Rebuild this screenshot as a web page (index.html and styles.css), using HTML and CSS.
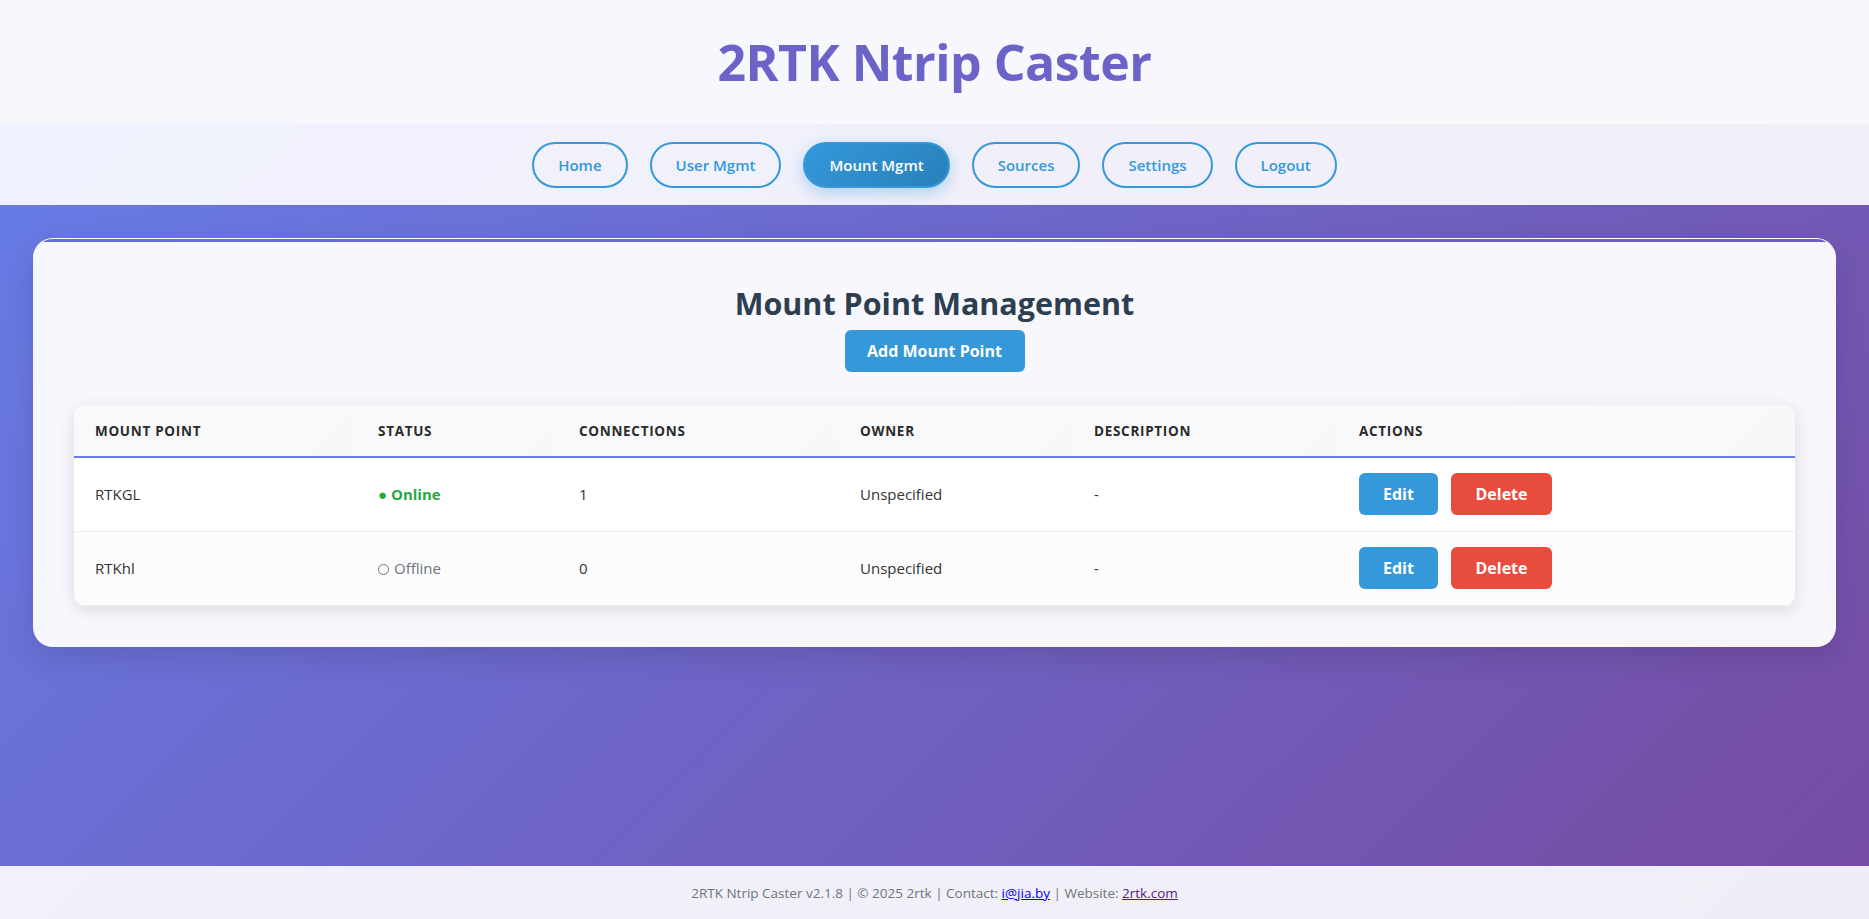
FILE: index.html
```html
<!DOCTYPE html>
<html lang="en">
<head>
<meta charset="utf-8">
<title>2RTK Ntrip Caster</title>
<link rel="stylesheet" href="styles.css">
</head>
<body>
<div class="page">
  <header class="site-header">
    <h1 class="brand">2RTK Ntrip Caster</h1>
  </header>
  <nav class="main-nav">
    <a class="nav-btn" href="#">Home</a>
    <a class="nav-btn" href="#">User Mgmt</a>
    <a class="nav-btn active" href="#">Mount Mgmt</a>
    <a class="nav-btn" href="#">Sources</a>
    <a class="nav-btn" href="#">Settings</a>
    <a class="nav-btn" href="#">Logout</a>
  </nav>
  <main class="content">
    <section class="card">
      <div class="card-head">
        <h2 class="card-title">Mount Point Management</h2>
        <button class="btn btn-primary btn-add">Add Mount Point</button>
      </div>
      <div class="table-wrap">
        <table class="data-table">
          <colgroup>
            <col class="c-mount"><col class="c-status"><col class="c-conn"><col class="c-owner"><col class="c-desc"><col class="c-actions">
          </colgroup>
          <thead>
            <tr>
              <th>Mount Point</th>
              <th>Status</th>
              <th>Connections</th>
              <th>Owner</th>
              <th>Description</th>
              <th>Actions</th>
            </tr>
          </thead>
          <tbody>
            <tr>
              <td>RTKGL</td>
              <td><span class="status online">● Online</span></td>
              <td>1</td>
              <td>Unspecified</td>
              <td>-</td>
              <td class="actions"><button class="btn btn-primary">Edit</button><button class="btn btn-danger">Delete</button></td>
            </tr>
            <tr>
              <td>RTKhl</td>
              <td><span class="status offline"><span class="ring"></span>Offline</span></td>
              <td>0</td>
              <td>Unspecified</td>
              <td>-</td>
              <td class="actions"><button class="btn btn-primary">Edit</button><button class="btn btn-danger">Delete</button></td>
            </tr>
          </tbody>
        </table>
      </div>
    </section>
  </main>
  <footer class="site-footer">
    <p class="footer-text">2RTK Ntrip Caster v2.1.8 | © 2025 2rtk | Contact: <a class="link" href="#">i@jia.by</a> | Website: <a class="link visited" href="#">2rtk.com</a></p>
  </footer>
</div>
</body>
</html>
```
FILE: styles.css
```css
* { box-sizing: border-box; }
html, body { margin: 0; padding: 0; }
body {
  font-family: "Open Sans", "Noto Sans", sans-serif;
  background: linear-gradient(135deg, #667eea 0%, #764ba2 100%);
  min-height: 919px;
  color: #333;
}
.page {
  display: flex;
  flex-direction: column;
  min-height: 919px;
}
.site-header {
  height: 124px;
  display: flex;
  align-items: center;
  justify-content: center;
  background: rgba(255, 255, 255, 0.95);
}
.brand {
  margin: 0;
  font-size: 50px;
  font-weight: 700;
  color: #6c63c8;
  letter-spacing: -0.5px;
}
.main-nav {
  height: 81px;
  display: flex;
  align-items: center;
  justify-content: center;
  gap: 22px;
  background: rgba(255, 255, 255, 0.9);
}
.nav-btn {
  display: inline-flex;
  align-items: center;
  height: 46px;
  padding: 0 24px;
  border: 2px solid #3498db;
  border-radius: 25px;
  color: #3498db;
  font-size: 15px;
  font-weight: 600;
  text-decoration: none;
  background: transparent;
}
.nav-btn.active {
  background: linear-gradient(135deg, #3498db, #2980b9);
  color: #fff;
  box-shadow: 0 5px 15px rgba(52, 152, 219, 0.35);
}
.content {
  flex: 1;
  padding: 33px 33px;
}
.card {
  position: relative;
  background: rgba(255, 255, 255, 0.95);
  border-radius: 20px;
  border-top: 1px solid #fff;
  padding: 43px 41px 41px;
  box-shadow: 0 10px 30px rgba(0, 0, 0, 0.12);
  overflow: hidden;
}
.card::before {
  content: "";
  position: absolute;
  top: 0;
  left: 0;
  right: 0;
  height: 3px;
  background: linear-gradient(90deg, #6670dc, #6f5cc0);
}
.card-head {
  display: flex;
  flex-direction: column;
  align-items: center;
  gap: 6px;
  margin-bottom: 33px;
}
.card-title {
  margin: 0;
  font-size: 30.5px;
  font-weight: 700;
  color: #2c3e50;
}
.btn {
  border: none;
  border-radius: 6px;
  font-family: "Open Sans", "Noto Sans", sans-serif;
  font-weight: 700;
  font-size: 16px;
  color: #fff;
  height: 42px;
  padding: 0 20px;
  cursor: pointer;
}
.btn-primary { background: #3498db; }
.btn-danger { background: #e74c3c; }
.btn-add { width: 180px; padding: 0; }
.table-wrap {
  background: #fff;
  border-radius: 12px;
  overflow: hidden;
  box-shadow: 0 4px 16px rgba(0, 0, 0, 0.12);
}
.data-table {
  width: 100%;
  border-collapse: collapse;
  table-layout: fixed;
}
.c-mount { width: 283px; }
.c-status { width: 201px; }
.c-conn { width: 281px; }
.c-owner { width: 234px; }
.c-desc { width: 265px; }
.data-table th {
  height: 52px;
  text-align: left;
  padding: 0 21px;
  font-size: 13.5px;
  font-weight: 700;
  text-transform: uppercase;
  letter-spacing: 0.7px;
  color: #2b2b2b;
  background: linear-gradient(135deg, #f8f9fa, #f7f8f9);
  border-bottom: 2px solid #667eea;
}
.data-table td {
  height: 74px;
  padding: 0 21px;
  font-size: 15px;
  color: #333;
  border-bottom: 1px solid #f0f0f0;
}
.data-table tbody tr:nth-child(2) td { background: #fcfcfc; }
.status.online { color: #28a745; font-weight: 700; }
.status.offline { color: #6c757d; }
.ring {
  display: inline-block;
  width: 11px;
  height: 11px;
  border: 1.4px solid #6c757d;
  border-radius: 50%;
  margin-right: 5px;
  vertical-align: -1px;
}
.actions { white-space: nowrap; }
.actions .btn { margin-right: 13px; }
.actions .btn-primary { width: 79px; padding: 0; }
.actions .btn-danger { width: 101px; padding: 0; }
.site-footer {
  height: 53px;
  display: flex;
  align-items: center;
  justify-content: center;
  background: rgba(255, 255, 255, 0.9);
}
.footer-text {
  margin: 0;
  font-size: 13.5px;
  color: #6c757d;
}
.link { color: #0000ee; }
.link.visited { color: #551a8b; }
```
